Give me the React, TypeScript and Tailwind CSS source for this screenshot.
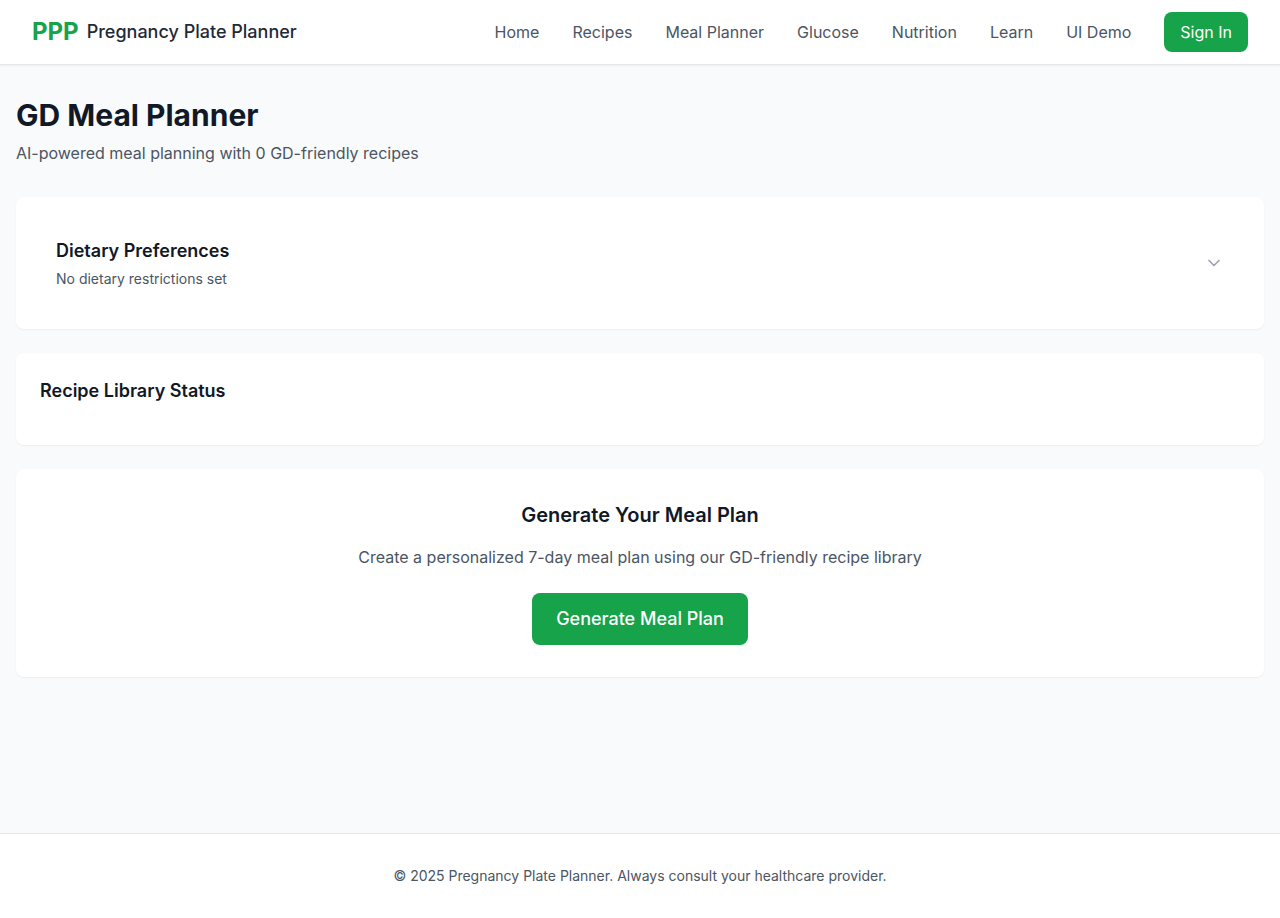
import React, { useState } from "react";
import { ChevronDown } from "lucide-react";

const links = ["Home", "Recipes", "Meal Planner", "Glucose", "Nutrition", "Learn", "UI Demo"];

function Header() {
  return (
    <header className="border-b border-gray-200 bg-white shadow-xs">
      <div className="mx-auto flex h-16 max-w-7xl items-center justify-between px-8">
        <a href="#home" className="flex items-center">
          <span className="text-2xl font-bold text-[#16a34a]">PPP</span>
          <span className="ml-2 text-lg font-medium text-[#1f2937]">Pregnancy Plate Planner</span>
        </a>
        <nav className="flex items-center gap-[33px]">
          {links.map((label) => (
            <a key={label} href="#nav" className="text-[#4b5563]">
              {label}
            </a>
          ))}
          <a href="#signin" className="rounded-lg bg-[#16a34a] px-4 py-2 text-white">
            Sign In
          </a>
        </nav>
      </div>
    </header>
  );
}

function DietaryPreferences() {
  const [open, setOpen] = useState(false);
  return (
    <section className="mb-6 rounded-lg bg-white p-6 shadow-xs">
      <button
        type="button"
        aria-expanded={open}
        onClick={() => setOpen(!open)}
        className="flex w-full items-center justify-between p-4 text-left"
      >
        <div>
          <h2 className="text-lg font-semibold text-[#111827]">Dietary Preferences</h2>
          <p className="mt-1 text-sm text-[#4b5563]">No dietary restrictions set</p>
        </div>
        <ChevronDown className="h-5 w-5 text-[#9ca3af]" aria-hidden="true" />
      </button>
    </section>
  );
}

export default function App() {
  return (
    <div className="flex min-h-screen flex-col bg-[#f9fafb] font-[Inter,sans-serif] text-base">
      <Header />
      <main className="mx-auto w-full max-w-7xl flex-1 px-4 py-8">
        <div className="mb-8">
          <h1 className="mb-2 text-3xl font-bold text-[#111827]">GD Meal Planner</h1>
          <p className="text-[#4b5563]">AI-powered meal planning with 0 GD-friendly recipes</p>
        </div>
        <DietaryPreferences />
        <section className="mb-6 rounded-lg bg-white p-6 shadow-xs">
          <h2 className="mb-4 text-lg font-semibold text-[#111827]">Recipe Library Status</h2>
        </section>
        <section className="rounded-lg bg-white p-8 text-center shadow-xs">
          <h2 className="mb-4 text-xl font-semibold text-[#111827]">Generate Your Meal Plan</h2>
          <p className="mb-6 text-[#4b5563]">
            Create a personalized 7-day meal plan using our GD-friendly recipe library
          </p>
          <button type="button" className="rounded-lg bg-[#16a34a] px-6 py-3 text-lg font-medium text-white">
            Generate Meal Plan
          </button>
        </section>
      </main>
      <footer className="border-t border-gray-200 bg-white px-4 py-8">
        <p className="text-center text-sm text-[#4b5563]">
          © 2025 Pregnancy Plate Planner. Always consult your healthcare provider.
        </p>
      </footer>
    </div>
  );
}
